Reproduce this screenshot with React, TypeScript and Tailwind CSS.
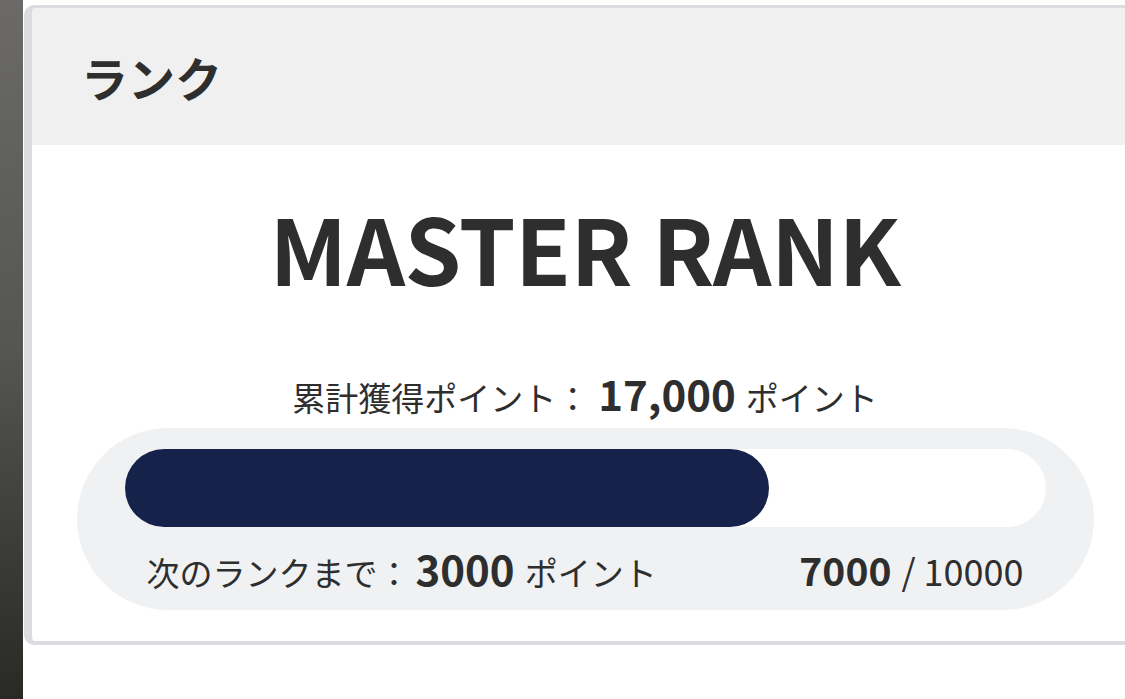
import React from "react";

const FONT = { fontFamily: '"Noto Sans CJK JP", "Noto Sans", sans-serif' };

export default function App() {
  const current = 7000;
  const goal = 10000;
  const percent = (current / goal) * 100;

  return (
    <main
      className="flex h-[699px] w-[1125px] overflow-hidden bg-white text-[#2e2e2e]"
      style={FONT}
    >
      <div className="h-full w-[23px] shrink-0 bg-gradient-to-b from-[#6b6a68] via-[#555553] to-[#292a25]" />

      <div className="ml-[1px] mt-[5px] w-[1114px] shrink-0">
        <section className="overflow-hidden rounded-[10px] border-b-[4px] border-l-[8px] border-t-[3px] border-[#dcdce0] bg-white">
          <header className="flex h-[137px] items-center bg-[#f0f0f0] pl-[49px]">
            <h1 className="text-[47px] font-bold leading-none">ランク</h1>
          </header>

          <div className="flex flex-col items-center pb-[31px] pt-[56px]">
            <h2 className="text-[91px] font-bold leading-none tracking-[-0.5px]">
              MASTER RANK
            </h2>

            <p className="mt-[80px] flex items-baseline justify-center leading-none">
              <span className="text-[33px]">累計獲得ポイント：</span>
              <span className="ml-[9px] text-[42px] font-bold">17,000</span>
              <span className="ml-[10px] text-[33px]">ポイント</span>
            </p>

            <div className="mt-[14px] w-[1017px] rounded-full bg-[#f0f1f3] px-[48px] pb-[21px] pt-[21px]">
              <div className="h-[78px] w-full rounded-full bg-white">
                <div
                  className="h-full rounded-full bg-[#16224a]"
                  style={{ width: `${percent}%` }}
                />
              </div>

              <div className="mt-[20px] flex items-baseline justify-between px-[22px] leading-none">
                <p className="flex items-baseline">
                  <span className="text-[33px]">次のランクまで：</span>
                  <span className="ml-[5px] text-[42px] font-bold">3000</span>
                  <span className="ml-[10px] text-[33px]">ポイント</span>
                </p>
                <p className="flex items-baseline">
                  <span className="text-[39px] font-bold">{current}</span>
                  <span className="ml-[10px] text-[36px]">/ {goal}</span>
                </p>
              </div>
            </div>
          </div>
        </section>
      </div>
    </main>
  );
}
